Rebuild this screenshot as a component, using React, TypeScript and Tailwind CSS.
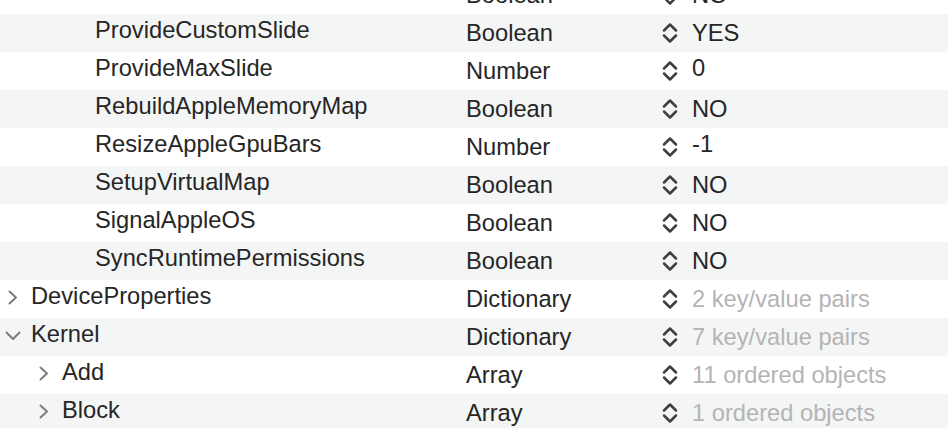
import React from 'react';

type Row = {
  key: string;
  level: 0 | 1 | 2;
  type: string;
  value: string;
  open?: boolean;
  folder?: boolean;
};

const rows: Row[] = [
  { key: 'ProtectUefiServices', level: 2, type: 'Boolean', value: 'NO' },
  { key: 'ProvideCustomSlide', level: 2, type: 'Boolean', value: 'YES' },
  { key: 'ProvideMaxSlide', level: 2, type: 'Number', value: '0' },
  { key: 'RebuildAppleMemoryMap', level: 2, type: 'Boolean', value: 'NO' },
  { key: 'ResizeAppleGpuBars', level: 2, type: 'Number', value: '-1' },
  { key: 'SetupVirtualMap', level: 2, type: 'Boolean', value: 'NO' },
  { key: 'SignalAppleOS', level: 2, type: 'Boolean', value: 'NO' },
  { key: 'SyncRuntimePermissions', level: 2, type: 'Boolean', value: 'NO' },
  { key: 'DeviceProperties', level: 0, type: 'Dictionary', value: '2 key/value pairs', folder: true },
  { key: 'Kernel', level: 0, type: 'Dictionary', value: '7 key/value pairs', folder: true, open: true },
  { key: 'Add', level: 1, type: 'Array', value: '11 ordered objects', folder: true },
  { key: 'Block', level: 1, type: 'Array', value: '1 ordered objects', folder: true },
];

const indent = {
  0: 'pl-[5px]',
  1: 'pl-[36px]',
  2: 'pl-[69px]',
};

// up/down arrows next to each value
function Stepper() {
  return (
    <svg width="16" height="22" viewBox="0 0 16 22" fill="none" className="shrink-0">
      <path d="M2 8.5 L8 2.5 L14 8.5" stroke="#3f3f3f" strokeWidth="2.5" strokeLinecap="round" strokeLinejoin="round" />
      <path d="M2 13.5 L8 19.5 L14 13.5" stroke="#3f3f3f" strokeWidth="2.5" strokeLinecap="round" strokeLinejoin="round" />
    </svg>
  );
}

function Disclosure({ open }: { open?: boolean }) {
  if (open) {
    return (
      <svg width="16" height="10" viewBox="0 0 16 10" fill="none">
        <path d="M1.5 1.5 L8 8 L14.5 1.5" stroke="#7b7b7b" strokeWidth="2" strokeLinecap="round" strokeLinejoin="round" />
      </svg>
    );
  }
  return (
    <svg width="10" height="15" viewBox="0 0 10 15" fill="none" className="ml-[3px]">
      <path d="M1.5 1.5 L8 7.5 L1.5 13.5" stroke="#7b7b7b" strokeWidth="2" strokeLinecap="round" strokeLinejoin="round" />
    </svg>
  );
}

export default function App() {
  return (
    <div className="h-[428px] w-[948px] overflow-hidden bg-white text-[23.7px] leading-none text-[#262626] font-['Liberation_Sans',Arial,sans-serif]">
      <div className="mt-[-24px]">
        {rows.map((r, i) => (
          <div
            key={r.key}
            className={`grid h-[38px] grid-cols-[466px_196px_1fr] ${i % 2 === 1 ? 'bg-[#f4f5f5]' : 'bg-white'}`}
          >
            <div className={`flex h-[38px] items-center pb-[5px] ${indent[r.level]}`}>
              <div className="flex w-[26px] items-center pt-[2px]">{r.folder && <Disclosure open={r.open} />}</div>
              <span className="whitespace-nowrap">{r.key}</span>
            </div>
            <div className="flex h-[38px] items-center">
              <span className="whitespace-nowrap pt-[1px]">{r.type}</span>
            </div>
            <div className="flex h-[38px] items-center gap-[14px]">
              <Stepper />
              <span
                className={`whitespace-nowrap ${r.folder ? 'text-[#b4b4b4]' : ''} ${r.type === 'Number' ? 'pb-[4px]' : 'pt-[1px]'}`}
              >
                {r.value}
              </span>
            </div>
          </div>
        ))}
      </div>
    </div>
  );
}
